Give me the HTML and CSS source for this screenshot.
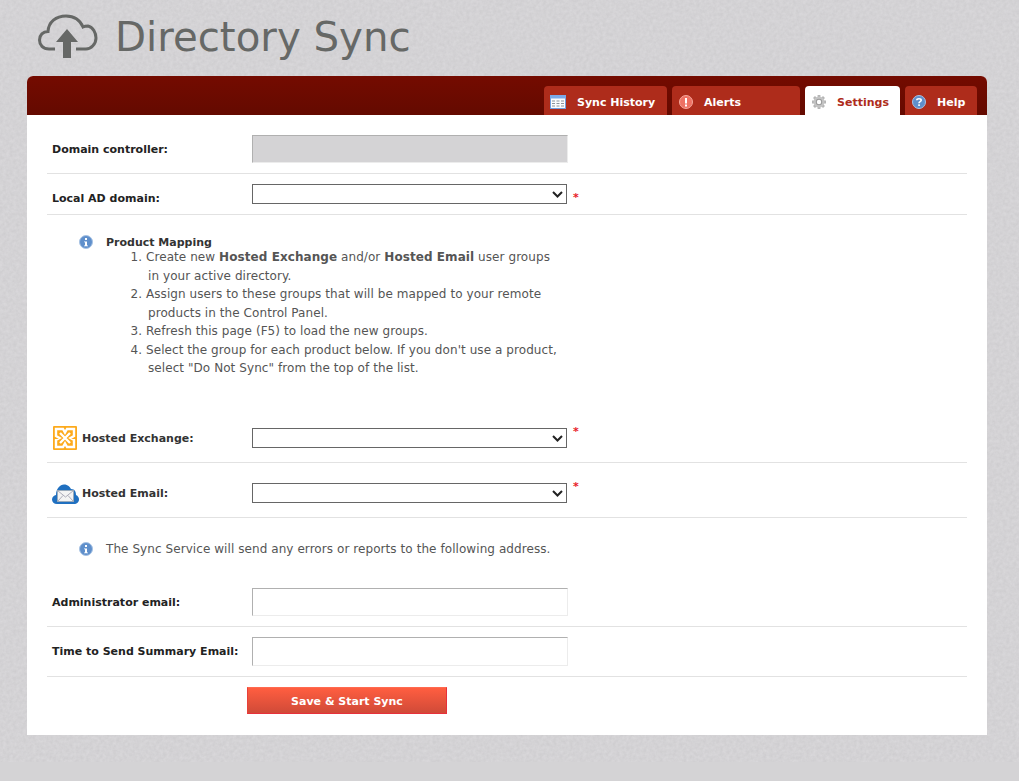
FILE: index.html
```html
<!DOCTYPE html>
<html lang="en">
<head>
<meta charset="utf-8">
<title>Directory Sync</title>
<link rel="stylesheet" href="styles.css">
</head>
<body>
<div class="page">
    <header class="top">
        <svg class="logo" width="60" height="46" viewBox="0 0 60 46">
            <path d="M17 35H11C5 35 1.500 31 1.500 26C1.500 21 5 17.500 10 17.500C10.500 8 18 2 28 2C36 2 42 6 45 13C47 12 49 12 50 12C55 13 58 19 58 24C58 30 53 35 48 35H38" fill="none" stroke="#666866" stroke-width="3"/>
            <path d="M29 15L40 28H33V44H25V28H18Z" fill="#666866"/>
        </svg>
        <h1>Directory Sync</h1>
    </header>

    <div class="panel">
        <nav class="tabs">
            <a class="tab tab-history" href="#">
                <svg width="16" height="14" viewBox="0 0 16 14">
                    <rect x="0.500" y="0.500" width="15" height="13" fill="#fbfcfe" stroke="#6f9fe0"/>
                    <rect x="0" y="0" width="16" height="3.500" fill="#7ba9e8"/>
                    <path d="M2 6H5M6.500 6H9.500M11 6H14M2 8.500H5M6.500 8.500H9.500M11 8.500H14M2 11H5M6.500 11H9.500M11 11H14" stroke="#8c929c" stroke-width="1.200"/>
                </svg>
                Sync History
            </a>
            <a class="tab tab-alerts" href="#">
                <svg width="14" height="14" viewBox="0 0 14 14">
                    <circle cx="7" cy="7" r="6.500" fill="#ee7163" stroke="#f6a79c"/>
                    <rect x="6" y="3" width="2" height="5.500" fill="#fff"/>
                    <rect x="6" y="9.500" width="2" height="2" fill="#fff"/>
                </svg>
                Alerts
            </a>
            <a class="tab tab-settings active" href="#">
                <svg width="16" height="16" viewBox="0 0 16 16">
                    <path d="M8 1V15M1 8H15M3 3L13 13M13 3L3 13" stroke="#b5b5b5" stroke-width="2.800"/>
                    <circle cx="8" cy="8" r="5.500" fill="#c4c4c4"/>
                    <circle cx="8" cy="8" r="3.200" fill="#9a9a9a"/>
                    <circle cx="8" cy="8" r="2.200" fill="#fff"/>
                </svg>
                Settings
            </a>
            <a class="tab tab-help" href="#">
                <svg width="14" height="14" viewBox="0 0 14 14">
                    <circle cx="7" cy="7" r="6.500" fill="#5f8fcb" stroke="#a8c3e4"/>
                    <path d="M4.800 5.300C4.800 3.200 9.200 3.200 9.200 5.300C9.200 6.800 7 6.600 7 8.300" fill="none" stroke="#fff" stroke-width="1.600"/>
                    <rect x="6.200" y="9.300" width="1.700" height="1.700" fill="#fff"/>
                </svg>
                Help
            </a>
        </nav>

        <form class="form">
            <div class="row row-first">
                <label class="field-label">Domain controller:</label>
                <input class="text-input locked" type="text" disabled>
            </div>
            <div class="row">
                <label class="field-label label-low">Local AD domain:</label>
                <select class="pick"><option></option></select>
                <span class="req req-low">*</span>
            </div>

            <div class="note note-mapping">
                <svg class="info" width="14" height="14" viewBox="0 0 14 14">
                    <circle cx="7" cy="7" r="6.500" fill="#5f8fcb" stroke="#a8c3e4"/>
                    <rect x="6" y="3" width="2" height="2" fill="#fff"/>
                    <path d="M5 6.500H8V10.500H9V11.200H5V10.500H6V7.200H5Z" fill="#fff"/>
                </svg>
                <div>
                    <div class="note-title">Product Mapping</div>
                    <ol class="steps">
                        <li>Create new <b>Hosted Exchange</b> and/or <b>Hosted Email</b> user groups<br>in your active directory.</li>
                        <li>Assign users to these groups that will be mapped to your remote<br>products in the Control Panel.</li>
                        <li>Refresh this page (F5) to load the new groups.</li>
                        <li>Select the group for each product below. If you don't use a product,<br>select "Do Not Sync" from the top of the list.</li>
                    </ol>
                </div>
            </div>

            <div class="row row-product">
                <label class="field-label product-label">
                    <svg class="product-icon" width="24" height="24" viewBox="0 0 24 24">
                        <rect width="24" height="24" fill="#fdaa1c" rx="1"/>
                        <path d="M3 3H10L12 6.500L14 3H21V10L17.500 12L21 14V21H14L12 17.500L10 21H3V14L6.500 12L3 10Z" fill="none" stroke="#fff" stroke-width="2.400"/>
                        <path d="M7 7L17 17M17 7L7 17" stroke="#fff" stroke-width="2.400"/>
                    </svg>
                    Hosted Exchange:
                </label>
                <select class="pick"><option></option></select>
                <span class="req req-high">*</span>
            </div>
            <div class="row row-product">
                <label class="field-label product-label">
                    <svg class="product-icon mail-icon" width="27" height="21" viewBox="0 0 27 21">
                        <path d="M5 20C2 20 0 18 0 15.500C0 13 2 11.500 4 11C4 5 8 0.500 12 0.500C16 0.500 18 3 19 5C23 5 24 8 24 11C26 12 27 13.500 27 15.500C27 18 25 20 22 20Z" fill="#2070c0"/>
                        <rect x="5.500" y="6.500" width="16" height="11" fill="#f4f4f4" stroke="#9ab"/>
                        <path d="M5.500 6.500L13.500 13L21.500 6.500M5.500 17.500L11 11.500M21.500 17.500L16 11.500" fill="none" stroke="#99a" stroke-width="0.800"/>
                    </svg>
                    Hosted Email:
                </label>
                <select class="pick"><option></option></select>
                <span class="req req-high">*</span>
            </div>

            <div class="note note-sync">
                <svg class="info" width="14" height="14" viewBox="0 0 14 14">
                    <circle cx="7" cy="7" r="6.500" fill="#5f8fcb" stroke="#a8c3e4"/>
                    <rect x="6" y="3" width="2" height="2" fill="#fff"/>
                    <path d="M5 6.500H8V10.500H9V11.200H5V10.500H6V7.200H5Z" fill="#fff"/>
                </svg>
                <div>The Sync Service will send any errors or reports to the following address.</div>
            </div>

            <div class="row row-plain">
                <label class="field-label">Administrator email:</label>
                <input class="text-input" type="text">
            </div>
            <div class="row">
                <label class="field-label">Time to Send Summary Email:</label>
                <input class="text-input tall" type="text">
            </div>

            <div class="actions">
                <button class="save" type="button">Save &amp; Start Sync</button>
            </div>
        </form>
    </div>
</div>
</body>
</html>
```

FILE: styles.css
```css
html, body {
    margin: 0;
    padding: 0;
}

body {
    min-height: 781px;
    overflow: hidden;
    background-color: #d4d3d5;
    background-image: url("data:image/svg+xml,%3Csvg xmlns='http://www.w3.org/2000/svg' width='1019' height='762'%3E%3Cfilter id='n' color-interpolation-filters='sRGB'%3E%3CfeTurbulence type='fractalNoise' baseFrequency='0.3' numOctaves='3'/%3E%3CfeColorMatrix values='0.06 0 0 0 0.8 0.06 0 0 0 0.795 0.06 0 0 0 0.805 0 0 0 0 1'/%3E%3C/filter%3E%3Crect width='1019' height='762' filter='url(%23n)'/%3E%3C/svg%3E");
    background-repeat: no-repeat;
    color: #555;
    font-family: "DejaVu Sans", Verdana, sans-serif;
    font-size: 12px;
}

.page {
    width: 960px;
    margin-left: 27px;
}

.top {
    display: flex;
    align-items: center;
    height: 76px;
    padding-left: 11px;
    box-sizing: border-box;
}

.logo {
    margin-top: -2px;
}

.top h1 {
    margin: -1px 0 0 17px;
    color: #666866;
    font-size: 40.300px;
    font-weight: normal;
    line-height: 50px;
}

.panel {
    background: #fff;
    border-radius: 6px 6px 0 0;
    padding-bottom: 21px;
}

.tabs {
    display: flex;
    justify-content: flex-end;
    gap: 5px;
    height: 29px;
    padding: 10px 10px 0 0;
    border-radius: 6px 6px 0 0;
    background: linear-gradient(#740b00, #640a00);
}

.tab {
    display: flex;
    align-items: center;
    box-sizing: border-box;
    height: 29px;
    padding-top: 3px;
    border-radius: 4px 4px 0 0;
    background: #ae2c1b;
    color: #fff;
    font-size: 11px;
    font-weight: bold;
    text-decoration: none;
}

.tab-history {
    width: 123px;
    padding-left: 6px;
    gap: 11px;
}

.tab-alerts {
    width: 128px;
    padding-left: 7px;
    gap: 11px;
}

.tab-settings {
    width: 95px;
    padding-left: 6px;
    gap: 10px;
}

.tab-help {
    width: 72px;
    padding-left: 7px;
    gap: 11px;
}

.tab.active {
    background: #fff;
    color: #ae2c1b;
}

.form {
    margin: 0 20px;
}

.row {
    display: flex;
    align-items: center;
    padding: 10px 0 10px 5px;
    border-bottom: 1px solid #e2e2e2;
}

.row-first {
    padding-top: 20px;
}

.row-product {
    padding: 20px 0 14px 5px;
}

.row-plain {
    padding-top: 0;
}

.field-label {
    display: flex;
    align-items: center;
    width: 200px;
    flex: none;
    color: #222;
    font-size: 11px;
    font-weight: bold;
}

.label-low {
    align-self: flex-end;
    margin-bottom: -1px;
}

.product-label {
    position: relative;
    padding-left: 30px;
    box-sizing: border-box;
    color: #333;
}

.product-icon {
    position: absolute;
    left: 1px;
    top: -6px;
}

.mail-icon {
    left: 0;
    top: -3px;
}

.text-input {
    box-sizing: border-box;
    width: 316px;
    height: 28px;
    margin: 0;
    padding: 0 4px;
    border: 1px solid #ececec;
    border-top-color: #b0b0b0;
    border-left-color: #b0b0b0;
    background: #fff;
}

.text-input.tall {
    height: 29px;
}

.text-input.locked {
    background: #d4d3d5;
}

.pick {
    box-sizing: border-box;
    width: 315px;
    height: 20px;
    margin: 0;
    border: 1px solid #666;
    border-radius: 0;
    appearance: none;
    background: #fff url("data:image/svg+xml,%3Csvg xmlns='http://www.w3.org/2000/svg' width='11' height='7'%3E%3Cpath d='M1 1L5.500 5.500L10 1' fill='none' stroke='%23222' stroke-width='2'/%3E%3C/svg%3E") no-repeat right 3px center;
    font-size: 11px;
}

.req {
    margin-left: 6px;
    color: #e8202a;
    font-size: 11px;
    font-weight: bold;
    line-height: 12px;
}

.req-low {
    align-self: flex-end;
}

.req-high {
    margin-top: -12px;
}

.note {
    display: flex;
    gap: 13px;
    padding-left: 32px;
    letter-spacing: 0.070px;
}

.note-mapping {
    height: 172px;
    padding-top: 21px;
}

.note-mapping .info {
    margin-top: -1px;
}

.note-sync {
    height: 46px;
    padding-top: 24px;
    line-height: 14px;
}

.note-title {
    color: #333;
    font-size: 11px;
    font-weight: bold;
    line-height: 14px;
    letter-spacing: 0;
}

.steps {
    margin: -2px 0 0;
    padding: 0 0 0 40px;
    line-height: 18.500px;
}

.steps li {
    text-indent: -2px;
    padding-left: 2px;
}

.actions {
    padding: 10px 0 0 200px;
}

.save {
    display: block;
    box-sizing: border-box;
    width: 200px;
    height: 27px;
    margin: 0;
    padding: 1px 0 0;
    border: 1px solid #e8303a;
    border-top-color: #ff6a50;
    border-left-color: #e8403a;
    background: linear-gradient(#ff5e40, #d04a38);
    color: #fff;
    font-family: inherit;
    font-size: 11px;
    font-weight: bold;
}
```
